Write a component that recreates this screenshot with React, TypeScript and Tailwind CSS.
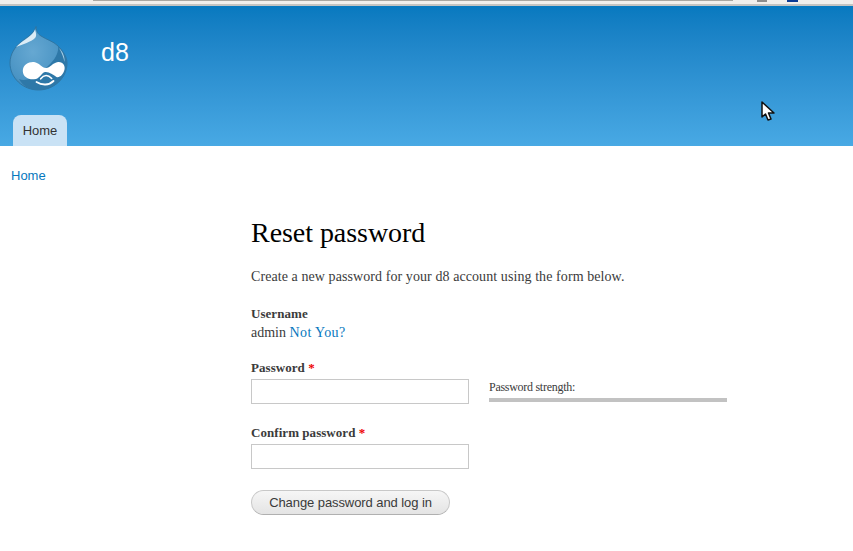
import React from 'react';

const serif = { fontFamily: '"Liberation Serif", serif' };

const DrupalLogo = () => (
    <svg width="60" height="68" viewBox="0 0 60 68" className="block">
        <defs>
            <radialGradient id="drop" cx="0.4" cy="0.4" r="0.7">
                <stop offset="0" stopColor="#66a8d2" />
                <stop offset="0.7" stopColor="#4a94c4" />
                <stop offset="1" stopColor="#2a6f9f" />
            </radialGradient>
        </defs>
        <path
            d="M27 1.500 C27.500 7 29 9 32 11 C38 15 44 16 49 21 C54 26 58 32 58 38 C58 53 45 65 29.500 65 C14 65 1 53 1 38 C1 29 6 22 12 17 C18 12 25 9 27 1.500 Z"
            fill="url(#drop)"
            stroke="#2f7099"
            strokeWidth="0.800"
        />
        <path d="M58 38 C58 53 45 65 29.500 65 C20 65 14 61 10 54 C20 58 32 48 42 38 C47 33 50 26 49 21 C54 26 58 32 58 38 Z" fill="#2e78a8" />
        <path d="M26 4.500 C24 11 15 14 7 22 C14 19 22 17 26 13 C28 11 27 8 26 4.500 Z" fill="#dcecf6" />
        <path d="M50 23 C54 27 56 32 55.500 37 C54.500 32 52.500 27 50 23 Z" fill="#a9cfe6" />
        <path
            d="M13.800 46 C13.800 39.500 20 36.500 25 37 C30 37.500 33 43 37 43 C41 43 44 37.500 49 37 C54 36.500 56.500 41 55.500 44.500 C54.500 49.500 50.500 53 47.500 52 C44 49.500 40 46.500 36 47 C32 48 31 54 25 54.300 C19 54.800 13.800 51.500 13.800 46 Z"
            fill="#ffffff"
        />
        <path d="M27.500 57 C33 60.500 40 60.500 44.500 56" fill="none" stroke="#ffffff" strokeWidth="1.800" strokeLinecap="round" />
        <path d="M31.700 53.800 C35 49.500 39 49.500 42.700 53.500" fill="none" stroke="#ffffff" strokeWidth="1.600" strokeLinecap="round" />
    </svg>
);

const Cursor = () => (
    <svg width="15" height="21" viewBox="0 0 15 21" className="absolute left-[761px] top-[101px]">
        <path d="M1 1 L1 16 L4.500 13 L7 19 L10 18 L7.500 12 L13 12 Z" fill="#ffffff" stroke="#111111" strokeWidth="1.500" strokeLinejoin="round" />
    </svg>
);

const Field = ({ label, id }: { label: string; id: string }) => (
    <div>
        <label htmlFor={id} className="block text-[13px] leading-[18px] font-bold text-[#3b3b3b] tracking-[0.05px]">
            {label} <span className="text-[#e00]">*</span>
        </label>
        <input id={id} type="password" className="block mt-[2px] w-[218px] h-[25px] border border-[#c8c8c8] bg-white" />
    </div>
);

export default function App() {
    return (
        <div className="relative h-[551px] w-[853px] overflow-hidden bg-white" style={serif}>
            {/* Browser chrome leftover */}
            <div className="relative h-[6px] bg-[#f1efec] border-b-2 border-[#c4c4c2]">
                <div className="absolute left-[93px] top-0 h-[1px] w-[640px] bg-[#a9a7a2]" />
                <div className="absolute left-[757px] top-0 h-[2px] w-[10px] bg-[#8d8d8d]" />
                <div className="absolute left-[787px] top-0 h-[2px] w-[11px] bg-[#0b3a94]" />
            </div>

            <header className="h-[140px] bg-gradient-to-b from-[#0779bf] to-[#48a9e4] flex flex-col justify-between">
                <div className="flex items-start pl-[9px] pt-[19px]">
                    <DrupalLogo />
                    <div className="ml-[32px] mt-[9px] text-[25px] leading-[36px] text-white font-['Liberation_Sans',sans-serif]">d8</div>
                </div>
                <nav className="pl-[13px]">
                    <a href="#" className="flex items-center justify-center w-[54px] h-[31px] rounded-t-[8px] bg-[#c9e2f5] text-[13px] text-[#333] font-['Liberation_Sans',sans-serif]">
                        Home
                    </a>
                </nav>
            </header>

            <div className="pl-[11px] pt-[21px] text-[13px] leading-[18px] text-[#0678be] font-['Liberation_Sans',sans-serif]">
                <a href="#">Home</a>
            </div>

            <main className="ml-[251px] w-[480px] text-[#3b3b3b]">
                <h1 className="mt-[30px] text-[28px] leading-[36px] tracking-[-0.05px] text-black">Reset password</h1>
                <p className="mt-[16px] text-[14px] leading-[20px] tracking-[0.08px]">
                    Create a new password for your d8 account using the form below.
                </p>
                <div className="mt-[18px] text-[13px] leading-[18px] font-bold tracking-[0.05px]">Username</div>
                <div className="text-[14px] leading-[20px]">
                    admin <a href="#" className="text-[#0678be] tracking-[0.4px]">Not You?</a>
                </div>

                <div className="mt-[16px] flex items-start">
                    <Field label="Password" id="pass1" />
                    <div className="ml-[20px] mt-[20px] w-[238px]">
                        <div className="text-[12px] leading-[16px] tracking-[-0.28px]">Password strength:</div>
                        <div className="mt-[3px] h-[4px] bg-[#c2c2c2]" />
                    </div>
                </div>

                <div className="mt-[20px]">
                    <Field label="Confirm password" id="pass2" />
                </div>

                <button className="mt-[21px] h-[25px] w-[199px] rounded-full border border-[#c8c8c8] border-b-[#b0b0b0] bg-gradient-to-b from-[#f6f6f6] to-[#e4e4e4] text-[13px] tracking-[-0.08px] text-[#3a3a3a] font-['Liberation_Sans',sans-serif]">
                    Change password and log in
                </button>
            </main>

            <Cursor />
        </div>
    );
}
